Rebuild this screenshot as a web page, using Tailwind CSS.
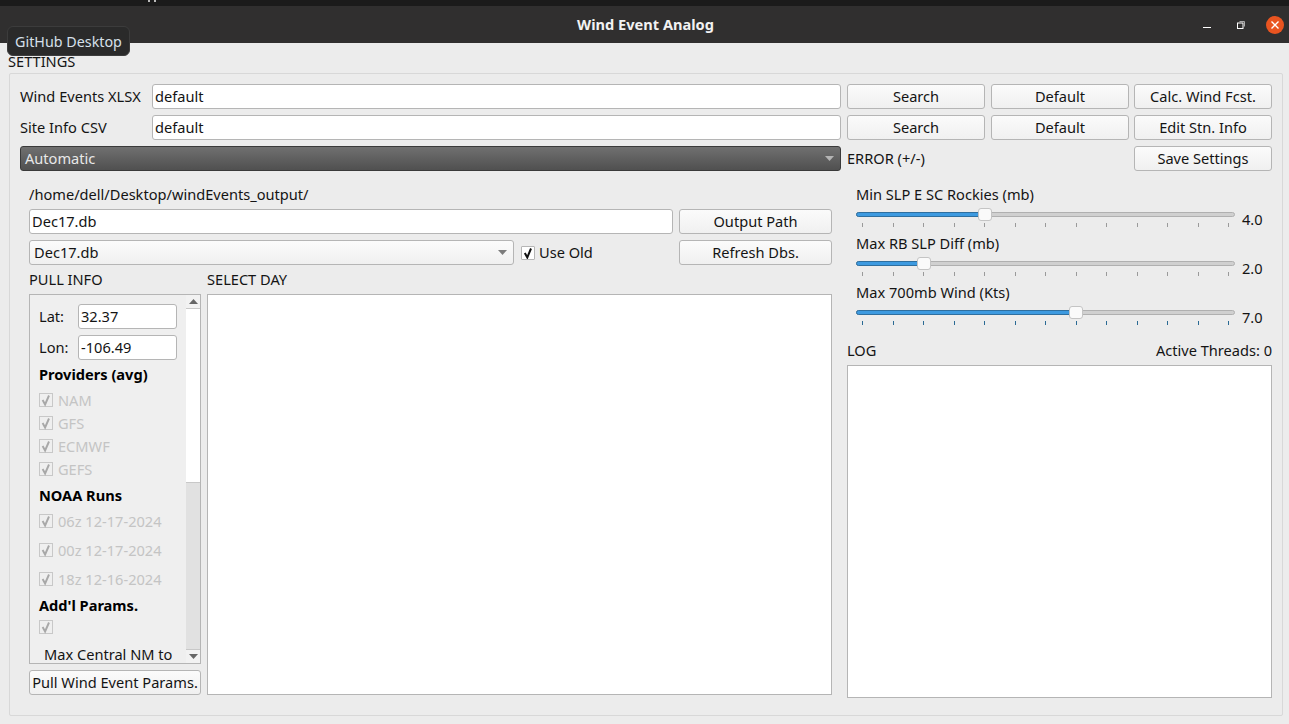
<!DOCTYPE html>
<html lang="en">
  <head>
    <meta charset="UTF-8" />
    <title>Wind Event Analog</title>
    <script src="https://cdn.jsdelivr.net/npm/@tailwindcss/browser@4"></script>
  </head>
  <body class="bg-[#ececec]">
    <div class="relative w-[1289px] h-[724px] overflow-hidden bg-[#ececec] text-[#141414] text-[14.6px] leading-[18px] font-['Noto_Sans','Open_Sans',sans-serif]">
      <!-- top strip -->
      <div class="h-[6px] bg-[#1b1b1b] flex items-start gap-[4px] pl-[148px]">
        <i class="w-[2px] h-[2px] bg-[#bbb]"></i>
        <i class="w-[2px] h-[2px] bg-[#bbb]"></i>
      </div>
      <!-- title bar -->
      <header class="relative h-[37px] bg-[#302f2f] flex items-center justify-center">
        <h1 class="text-[14.6px] font-bold text-[#f2f2f2] -translate-y-px translate-x-px">Wind Event Analog</h1>
        <div class="absolute right-[5px] top-0 h-full flex items-center">
          <svg width="10" height="10" viewBox="0 0 10 10"><path d="M1 7.500h8" stroke="#fff" stroke-width="1"/></svg>
          <svg class="ml-[24px]" width="10" height="10" viewBox="0 0 10 10" fill="none"><rect x="1.500" y="3" width="5.500" height="5.500" stroke="#fff"/><path d="M3.500 1.500h5v5" stroke="#aaa"/></svg>
          <div class="ml-[20px] w-[18px] h-[18px] rounded-full bg-[#e95420] flex items-center justify-center">
            <svg width="10" height="10" viewBox="0 0 10 10"><path d="M1.500 1.500l7 7M8.500 1.500l-7 7" stroke="#fff" stroke-width="1.4"/></svg>
          </div>
        </div>
      </header>

      <!-- launcher tooltip -->
      <div class="absolute left-[7px] top-[26px] w-[123px] h-[30px] pt-[2px] rounded-[6px] bg-[#2a2a2a] border border-[#3c3c3c] flex items-center justify-center text-[14.300px] text-[#d6e0ea]">GitHub Desktop</div>

      <main class="pl-[9px] pr-[6px]">
        <div class="h-[30px] pt-[9px] leading-[18px] -ml-px">SETTINGS</div>
        <section class="h-[643px] border border-[#d8d8d8] rounded-[2px] pt-[10px] pl-[10px]">
          <!-- file rows -->
          <div class="grid grid-cols-[126px_689px_138px_138px_138px] grid-rows-[25px_25px_25px] gap-y-[6px] gap-x-[6px] items-center">
            <label class="-translate-y-px">Wind Events XLSX</label>
            <input class="h-[25px] w-full bg-white border border-[#b5b5b5] rounded-[3px] px-[2px] pb-[2px] outline-none" value="default" />
            <button class="h-[25px] pb-[2px] bg-gradient-to-b from-[#fbfbfb] to-[#f0f0f0] border border-[#b5b5b5] rounded-[3px]">Search</button>
            <button class="h-[25px] pb-[2px] bg-gradient-to-b from-[#fbfbfb] to-[#f0f0f0] border border-[#b5b5b5] rounded-[3px]">Default</button>
            <button class="h-[25px] pb-[2px] w-[138px] -ml-px bg-gradient-to-b from-[#fbfbfb] to-[#f0f0f0] border border-[#b5b5b5] rounded-[3px] whitespace-nowrap">Calc. Wind Fcst.</button>

            <label class="-translate-y-px">Site Info CSV</label>
            <input class="h-[25px] w-full bg-white border border-[#b5b5b5] rounded-[3px] px-[2px] pb-[2px] outline-none" value="default" />
            <button class="h-[25px] pb-[2px] bg-gradient-to-b from-[#fbfbfb] to-[#f0f0f0] border border-[#b5b5b5] rounded-[3px]">Search</button>
            <button class="h-[25px] pb-[2px] bg-gradient-to-b from-[#fbfbfb] to-[#f0f0f0] border border-[#b5b5b5] rounded-[3px]">Default</button>
            <button class="h-[25px] pb-[2px] w-[138px] -ml-px bg-gradient-to-b from-[#fbfbfb] to-[#f0f0f0] border border-[#b5b5b5] rounded-[3px]">Edit Stn. Info</button>

            <div class="col-span-2 h-[25px] flex items-center justify-between pl-[4px] pr-[6px] bg-gradient-to-b from-[#707070] to-[#505050] border border-[#3a3a3a] rounded-[3px] text-[#e8e8e8]">
              <span class="-translate-y-px">Automatic</span>
              <svg width="9" height="5" viewBox="0 0 9 5"><path d="M0 0h9L4.500 5z" fill="#b4b4b4"/></svg>
            </div>
            <span class="col-span-2 -translate-y-px">ERROR (+/-)</span>
            <button class="h-[25px] pb-[2px] w-[138px] -ml-px bg-gradient-to-b from-[#fbfbfb] to-[#f0f0f0] border border-[#b5b5b5] rounded-[3px]">Save Settings</button>
          </div>

          <div class="flex mt-[15px] pl-[9px] gap-[15px]">
            <!-- left column -->
            <div class="w-[803px]">
              <div class="h-[18px] -translate-y-px">/home/dell/Desktop/windEvents_output/</div>
              <div class="mt-[5px] flex gap-[6px]">
                <input class="w-[644px] h-[25px] bg-white border border-[#b5b5b5] rounded-[3px] px-[2px] pb-[2px] outline-none" value="Dec17.db" />
                <button class="w-[153px] h-[25px] pb-[2px] bg-gradient-to-b from-[#fbfbfb] to-[#f0f0f0] border border-[#b5b5b5] rounded-[3px]">Output Path</button>
              </div>
              <div class="mt-[6px] flex items-center">
                <div class="w-[485px] h-[25px] flex items-center justify-between pl-[4px] pr-[6px] bg-gradient-to-b from-[#fbfbfb] to-[#f0f0f0] border border-[#b5b5b5] rounded-[3px]">
                  <span class="-translate-y-px">Dec17.db</span>
                  <svg width="9" height="5" viewBox="0 0 9 5"><path d="M0 0h9L4.500 5z" fill="#7c7c7c"/></svg>
                </div>
                <div class="w-[14px] h-[14px] ml-[7px] bg-white border border-[#b5b5b5] rounded-[1px] flex items-center justify-center">
                  <svg width="12" height="12" viewBox="0 0 12 12" fill="none"><path d="M2.800 6l2.500 4.500L9 1.500" stroke="#111" stroke-width="2"/></svg>
                </div>
                <span class="ml-[4px] w-[140px] -translate-y-px">Use Old</span>
                <button class="w-[153px] h-[25px] pb-[2px] bg-gradient-to-b from-[#fbfbfb] to-[#f0f0f0] border border-[#b5b5b5] rounded-[3px]">Refresh Dbs.</button>
              </div>

              <div class="mt-[6px] grid grid-cols-[172px_625px] gap-x-[6px]">
                <div class="h-[18px] -translate-y-px">PULL INFO</div>
                <div class="h-[18px] -translate-y-px">SELECT DAY</div>
                <div class="mt-[5px]">
                  <!-- scroll area -->
                  <div class="h-[370px] flex border border-[#b5b5b5] bg-[#efefef] overflow-hidden">
                    <div class="w-[157px] pl-[9px] pt-[9px] overflow-hidden">
                      <div class="flex items-center h-[25px]">
                        <span class="w-[39px] -translate-y-px">Lat:</span>
                        <input class="w-[99px] h-[25px] bg-white border border-[#b5b5b5] rounded-[3px] px-[2px] pb-[2px] outline-none" value="32.37" />
                      </div>
                      <div class="flex items-center h-[25px] mt-[6px]">
                        <span class="w-[39px] -translate-y-px">Lon:</span>
                        <input class="w-[99px] h-[25px] bg-white border border-[#b5b5b5] rounded-[3px] px-[2px] pb-[2px] outline-none" value="-106.49" />
                      </div>
                      <div class="mt-[5px] h-[18px] font-bold text-black whitespace-nowrap">Providers (avg)</div>
                      <div class="mt-[8px] flex flex-col gap-[5px] text-[#c4c4c4]">
                        <div class="h-[18px] flex items-center gap-[5px]"><svg width="14" height="14" viewBox="0 0 14 14" fill="none"><rect x=".5" y=".5" width="13" height="13" stroke="#c8c8c8"/><path d="M3.600 7l2.500 4.500L10 2.500" stroke="#a8a8a8" stroke-width="1.900"/></svg>NAM</div>
                        <div class="h-[18px] flex items-center gap-[5px]"><svg width="14" height="14" viewBox="0 0 14 14" fill="none"><rect x=".5" y=".5" width="13" height="13" stroke="#c8c8c8"/><path d="M3.600 7l2.500 4.500L10 2.500" stroke="#a8a8a8" stroke-width="1.900"/></svg>GFS</div>
                        <div class="h-[18px] flex items-center gap-[5px]"><svg width="14" height="14" viewBox="0 0 14 14" fill="none"><rect x=".5" y=".5" width="13" height="13" stroke="#c8c8c8"/><path d="M3.600 7l2.500 4.500L10 2.500" stroke="#a8a8a8" stroke-width="1.900"/></svg>ECMWF</div>
                        <div class="h-[18px] flex items-center gap-[5px]"><svg width="14" height="14" viewBox="0 0 14 14" fill="none"><rect x=".5" y=".5" width="13" height="13" stroke="#c8c8c8"/><path d="M3.600 7l2.500 4.500L10 2.500" stroke="#a8a8a8" stroke-width="1.900"/></svg>GEFS</div>
                      </div>
                      <div class="mt-[8px] h-[18px] font-bold text-black">NOAA Runs</div>
                      <div class="mt-[8px] flex flex-col gap-[11px] text-[#c4c4c4] whitespace-nowrap">
                        <div class="h-[18px] flex items-center gap-[5px]"><svg width="14" height="14" viewBox="0 0 14 14" fill="none"><rect x=".5" y=".5" width="13" height="13" stroke="#c8c8c8"/><path d="M3.600 7l2.500 4.500L10 2.500" stroke="#a8a8a8" stroke-width="1.900"/></svg>06z 12-17-2024</div>
                        <div class="h-[18px] flex items-center gap-[5px]"><svg width="14" height="14" viewBox="0 0 14 14" fill="none"><rect x=".5" y=".5" width="13" height="13" stroke="#c8c8c8"/><path d="M3.600 7l2.500 4.500L10 2.500" stroke="#a8a8a8" stroke-width="1.900"/></svg>00z 12-17-2024</div>
                        <div class="h-[18px] flex items-center gap-[5px]"><svg width="14" height="14" viewBox="0 0 14 14" fill="none"><rect x=".5" y=".5" width="13" height="13" stroke="#c8c8c8"/><path d="M3.600 7l2.500 4.500L10 2.500" stroke="#a8a8a8" stroke-width="1.900"/></svg>18z 12-16-2024</div>
                      </div>
                      <div class="mt-[8px] h-[18px] font-bold text-black">Add'l Params.</div>
                      <div class="mt-[6px] h-[14px]"><svg width="14" height="14" viewBox="0 0 14 14" fill="none"><rect x=".5" y=".5" width="13" height="13" stroke="#c8c8c8"/><path d="M3.600 7l2.500 4.500L10 2.500" stroke="#a8a8a8" stroke-width="1.900"/></svg></div>
                      <div class="mt-[11px] pl-[5px] whitespace-nowrap">Max Central NM to</div>
                    </div>
                    <!-- scrollbar -->
                    <div class="w-[14px] flex flex-col">
                      <div class="h-[14px] bg-[#f2f2f2] border-b border-[#c8c8c8] flex items-center justify-center"><svg width="9" height="5" viewBox="0 0 9 5"><path d="M0 5h9L4.500 0z" fill="#666"/></svg></div>
                      <div class="h-[174px] bg-white border-b border-[#c8c8c8]"></div>
                      <div class="flex-1 bg-[#e1e1e1]"></div>
                      <div class="h-[14px] bg-[#f2f2f2] border-t border-[#c8c8c8] flex items-center justify-center"><svg width="9" height="5" viewBox="0 0 9 5"><path d="M0 0h9L4.500 5z" fill="#666"/></svg></div>
                    </div>
                  </div>
                  <button class="mt-[6px] w-full h-[25px] pb-[2px] bg-gradient-to-b from-[#fbfbfb] to-[#f0f0f0] border border-[#b5b5b5] rounded-[3px] whitespace-nowrap">Pull Wind Event Params.</button>
                </div>
                <div class="mt-[5px] h-[401px] bg-white border border-[#b5b5b5]"></div>
              </div>
            </div>

            <!-- right column -->
            <div class="w-[425px]">
              <div class="pl-[9px]">
                <div class="h-[49px]">
                  <div class="h-[18px] -translate-y-px">Min SLP E SC Rockies (mb)</div>
                  <div class="flex">
                    <div class="w-[379px]">
                      <div class="relative mt-[5px] h-[10px] flex items-center">
                        <div class="w-full h-[5px] rounded-full bg-[#d0d0d0] border border-[#b0b0b0]"><div class="w-[34%] h-[5px] -mt-px -ml-px rounded-full bg-[#3d9ae0] border border-[#2f6f9f]"></div></div>
                        <div class="absolute left-[122px] top-[-1px] w-[14px] h-[13px] rounded-[3px] bg-[#fafafa] border border-[#c4c4c4]"></div>
                      </div>
                      <div class="mt-[4px] px-[6px] flex justify-between">
                        <i class="w-px h-[4px] bg-[#9a9a9a]"></i><i class="w-px h-[4px] bg-[#9a9a9a]"></i><i class="w-px h-[4px] bg-[#9a9a9a]"></i><i class="w-px h-[4px] bg-[#9a9a9a]"></i><i class="w-px h-[4px] bg-[#9a9a9a]"></i><i class="w-px h-[4px] bg-[#9a9a9a]"></i><i class="w-px h-[4px] bg-[#9a9a9a]"></i><i class="w-px h-[4px] bg-[#9a9a9a]"></i><i class="w-px h-[4px] bg-[#9a9a9a]"></i><i class="w-px h-[4px] bg-[#9a9a9a]"></i><i class="w-px h-[4px] bg-[#9a9a9a]"></i><i class="w-px h-[4px] bg-[#9a9a9a]"></i><i class="w-px h-[4px] bg-[#9a9a9a]"></i>
                      </div>
                    </div>
                    <span class="ml-[7px] mt-[6px]">4.0</span>
                  </div>
                </div>
                <div class="h-[49px]">
                  <div class="h-[18px] -translate-y-px">Max RB SLP Diff (mb)</div>
                  <div class="flex">
                    <div class="w-[379px]">
                      <div class="relative mt-[5px] h-[10px] flex items-center">
                        <div class="w-full h-[5px] rounded-full bg-[#d0d0d0] border border-[#b0b0b0]"><div class="w-[17%] h-[5px] -mt-px -ml-px rounded-full bg-[#3d9ae0] border border-[#2f6f9f]"></div></div>
                        <div class="absolute left-[61px] top-[-1px] w-[14px] h-[13px] rounded-[3px] bg-[#fafafa] border border-[#c4c4c4]"></div>
                      </div>
                      <div class="mt-[4px] px-[6px] flex justify-between">
                        <i class="w-px h-[4px] bg-[#9a9a9a]"></i><i class="w-px h-[4px] bg-[#9a9a9a]"></i><i class="w-px h-[4px] bg-[#9a9a9a]"></i><i class="w-px h-[4px] bg-[#9a9a9a]"></i><i class="w-px h-[4px] bg-[#9a9a9a]"></i><i class="w-px h-[4px] bg-[#9a9a9a]"></i><i class="w-px h-[4px] bg-[#9a9a9a]"></i><i class="w-px h-[4px] bg-[#9a9a9a]"></i><i class="w-px h-[4px] bg-[#9a9a9a]"></i><i class="w-px h-[4px] bg-[#9a9a9a]"></i><i class="w-px h-[4px] bg-[#9a9a9a]"></i><i class="w-px h-[4px] bg-[#9a9a9a]"></i><i class="w-px h-[4px] bg-[#9a9a9a]"></i>
                      </div>
                    </div>
                    <span class="ml-[7px] mt-[6px]">2.0</span>
                  </div>
                </div>
                <div class="h-[49px]">
                  <div class="h-[18px] -translate-y-px">Max 700mb Wind (Kts)</div>
                  <div class="flex">
                    <div class="w-[379px]">
                      <div class="relative mt-[5px] h-[10px] flex items-center">
                        <div class="w-full h-[5px] rounded-full bg-[#d0d0d0] border border-[#b0b0b0]"><div class="w-[58%] h-[5px] -mt-px -ml-px rounded-full bg-[#3d9ae0] border border-[#2f6f9f]"></div></div>
                        <div class="absolute left-[213px] top-[-1px] w-[14px] h-[13px] rounded-[3px] bg-[#fafafa] border border-[#c4c4c4]"></div>
                      </div>
                      <div class="mt-[4px] px-[6px] flex justify-between">
                        <i class="w-px h-[4px] bg-[#2a6a94]"></i><i class="w-px h-[4px] bg-[#2a6a94]"></i><i class="w-px h-[4px] bg-[#2a6a94]"></i><i class="w-px h-[4px] bg-[#2a6a94]"></i><i class="w-px h-[4px] bg-[#2a6a94]"></i><i class="w-px h-[4px] bg-[#2a6a94]"></i><i class="w-px h-[4px] bg-[#2a6a94]"></i><i class="w-px h-[4px] bg-[#2a6a94]"></i><i class="w-px h-[4px] bg-[#2a6a94]"></i><i class="w-px h-[4px] bg-[#2a6a94]"></i><i class="w-px h-[4px] bg-[#2a6a94]"></i><i class="w-px h-[4px] bg-[#2a6a94]"></i><i class="w-px h-[4px] bg-[#2a6a94]"></i>
                      </div>
                    </div>
                    <span class="ml-[7px] mt-[6px]">7.0</span>
                  </div>
                </div>
              </div>
              <div class="mt-[8px] h-[18px] flex justify-between">
                <span>LOG</span>
                <span>Active Threads: 0</span>
              </div>
              <div class="mt-[6px] h-[333px] bg-white border border-[#b5b5b5]"></div>
            </div>
          </div>
        </section>
      </main>
    </div>
  </body>
</html>
